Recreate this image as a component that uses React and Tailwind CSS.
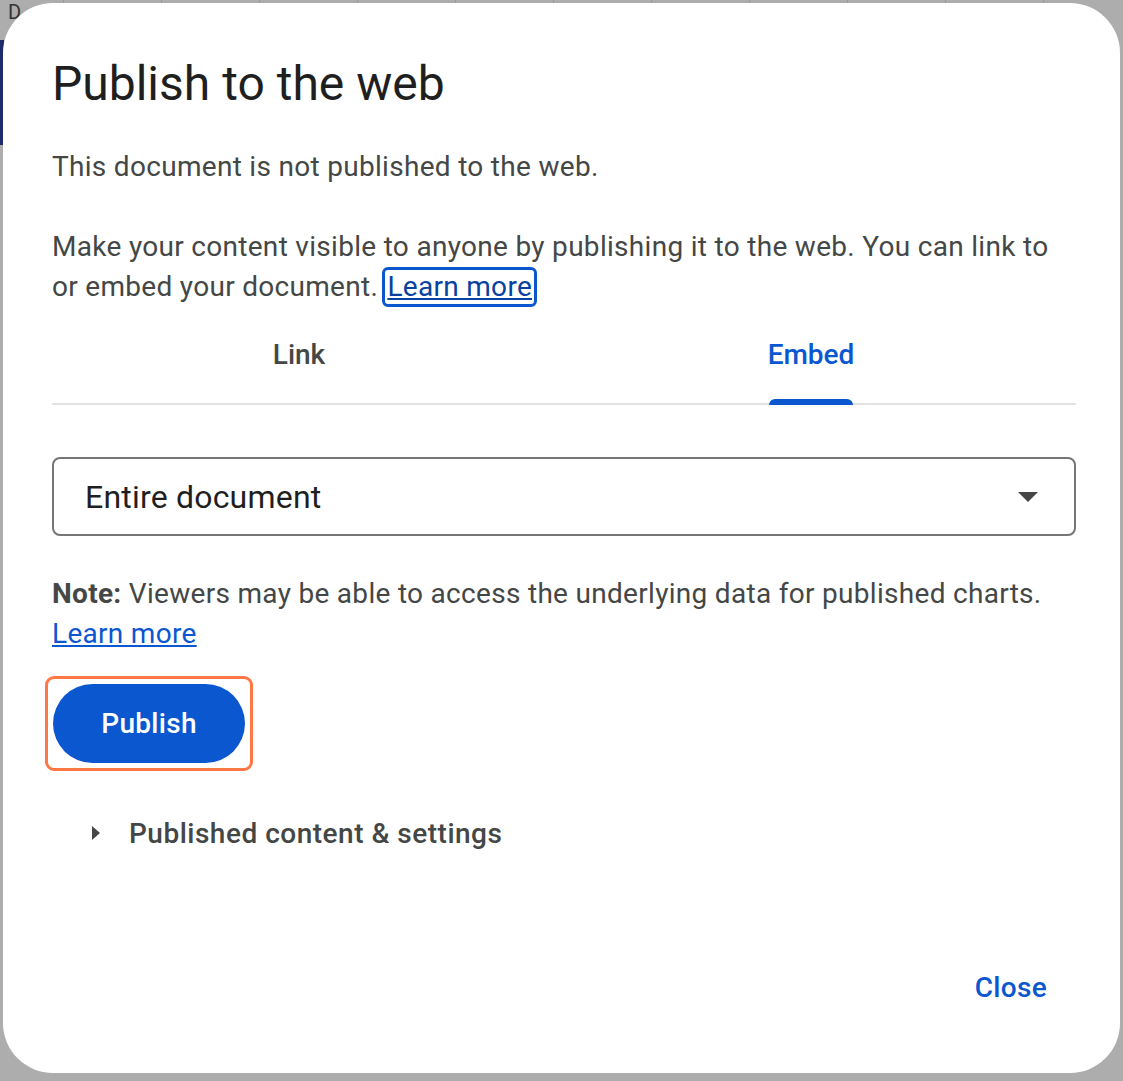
export default function App() {
  return (
    <div
      className="relative w-[1123px] h-[1081px] bg-[#adadad] overflow-hidden"
      style={{ fontFamily: 'Roboto, "Open Sans", sans-serif' }}
    >
      {/* backdrop spreadsheet remnants */}
      <div className="absolute left-0 top-0 w-full h-[4px] flex">
        {Array.from({ length: 11 }).map((_, i) => (
          <div key={i} className="w-[98px] h-full border-r border-[#9a9a9a] first:w-[64px]" />
        ))}
      </div>
      <div className="absolute left-[8px] top-[2px] text-[20px] leading-[20px] text-[#333]">D</div>
      <div className="absolute left-0 top-[40px] w-[4px] h-[105px] bg-[#1f2a6b]" />

      {/* dialog */}
      <div className="absolute left-[3px] top-[3px] w-[1117px] h-[1070px] bg-white rounded-[50px] flex flex-col pl-[49px] pr-[45px] pt-[49px]">
        <h1 className="text-[48px] leading-[64px] text-[#1f1f1f] font-normal">
          Publish to the web
        </h1>
        <p className="mt-[31px] text-[28px] leading-[40px] text-[#444746] tracking-[0.3px]">
          This document is not published to the web.
        </p>
        <p className="mt-[40px] text-[28px] leading-[40px] text-[#444746] tracking-[0.3px]">
          Make your content visible to anyone by publishing it to the web. You can link to or embed your document.{' '}
          <a
            href="#"
            className="inline-block align-top leading-[34px] -ml-[3px] px-[2px] border-[3px] border-[#0b57d0] rounded-[6px] underline text-[#0842a0]"
          >
            Learn more
          </a>
        </p>

        {/* tabs */}
        <div className="relative w-[1024px] h-[98px] border-b-2 border-[#e1e3e1] flex">
          <div className="ml-[-9px] w-[512px] flex items-center justify-center text-[28px] font-medium text-[#444746]">
            Link
          </div>
          <div className="relative w-[512px] flex items-center justify-center text-[28px] font-medium text-[#0b57d0]">
            Embed
            <div className="absolute bottom-[-2px] left-1/2 -translate-x-1/2 w-[84px] h-[6px] bg-[#0b57d0] rounded-t-[6px]" />
          </div>
        </div>

        {/* dropdown */}
        <div className="mt-[52px] w-[1024px] h-[79px] border-2 border-[#747775] rounded-[8px] flex items-center justify-between pl-[31px] pr-[36px]">
          <span className="text-[32px] text-[#1f1f1f] tracking-[0.2px]">Entire document</span>
          <svg width="20" height="10" viewBox="0 0 20 10">
            <path d="M0 0 L20 0 L10 10 Z" fill="#444746" />
          </svg>
        </div>

        <p className="mt-[38px] text-[28px] leading-[40px] text-[#444746] tracking-[0.3px]">
          <span className="font-bold">Note:</span> Viewers may be able to access the underlying data for published charts.
          <br />
          <a href="#" className="underline text-[#0b57d0]">Learn more</a>
        </p>

        {/* publish button with focus ring */}
        <div className="mt-[22px] self-start -ml-[7px] p-[5px] border-[3px] border-[#ff7846] rounded-[9px]">
          <button className="w-[192px] h-[79px] rounded-full bg-[#0b57d0] text-white text-[28px] font-medium tracking-[0.3px]">
            Publish
          </button>
        </div>

        <div className="mt-[43px] flex items-center h-[40px]">
          <svg width="10" height="16" viewBox="0 0 10 16" className="ml-[40px]">
            <path d="M0 0 L8 7 L0 14 Z" fill="#444746" />
          </svg>
          <span className="ml-[27px] text-[28px] font-medium text-[#444746] tracking-[0.5px]">
            Published content &amp; settings
          </span>
        </div>

        <div className="mt-[113px] flex justify-end pr-[28px]">
          <button className="text-[28px] font-medium text-[#0b57d0] tracking-[0.3px]">Close</button>
        </div>
      </div>
    </div>
  );
}
